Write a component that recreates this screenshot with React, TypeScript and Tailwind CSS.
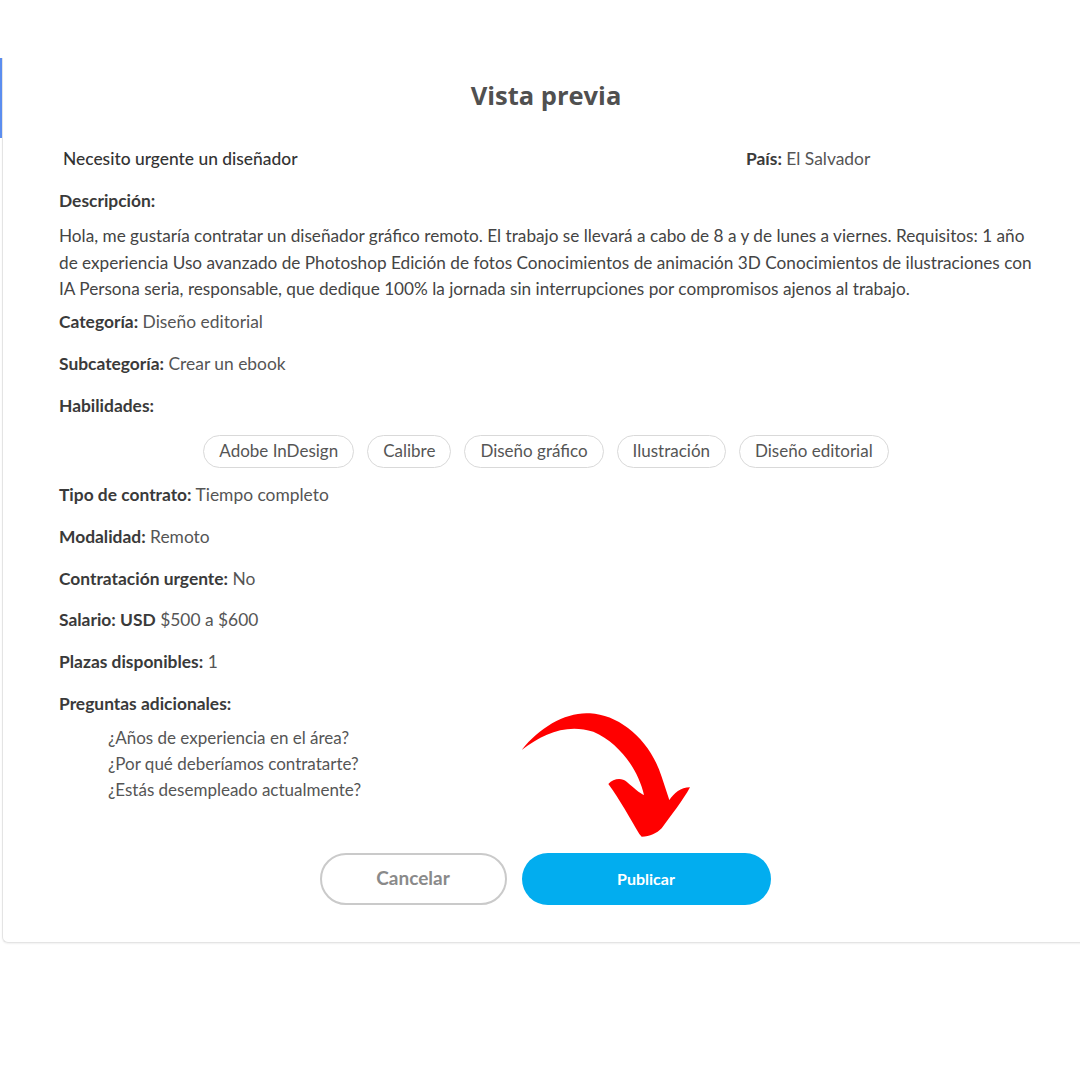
import React from "react";

const Row = ({ label, value, className = "" }: { label: string; value: string; className?: string }) => (
  <div className={"h-6 leading-6 text-[17.4px] " + className}>
    <span className="font-bold text-[#3a3a3a]">{label}</span>{" "}
    <span className="text-[#555]">{value}</span>
  </div>
);

const chips = ["Adobe InDesign", "Calibre", "Diseño gráfico", "Ilustración", "Diseño editorial"];

export default function App() {
  return (
    <div className="relative w-[1080px] h-[1080px] bg-white overflow-hidden" style={{ fontFamily: "Lato, 'Open Sans', sans-serif" }}>
      <div className="mt-[58px] ml-[2px] w-[1090px] border-l border-b border-[#e4e4e4] rounded-bl-[6px] shadow-[0_1px_2px_rgba(0,0,0,0.06)] pl-[56px] pr-[58px] pt-[21px] pb-[37px]">
        <div className="w-[974px]">
          <h1 className="text-center h-8 leading-8 text-[25.5px] font-bold text-[#505050]" style={{ fontFamily: "'Open Sans', sans-serif" }}>
            Vista previa
          </h1>
          <div className="mt-[36px] flex h-6 leading-6 text-[17.4px]">
            <div className="ml-[4px] w-[683px] font-medium text-[#333]">Necesito urgente un diseñador</div>
            <div>
              <span className="font-bold text-[#3a3a3a]">País:</span> <span className="text-[#555]">El Salvador</span>
            </div>
          </div>
          <div className="mt-[18px] h-6 leading-6 text-[17.4px] font-bold text-[#3a3a3a]">Descripción:</div>
          <p className="mt-[10px] text-[17.2px] leading-[26.5px] text-[#444]">
            Hola, me gustaría contratar un diseñador gráfico remoto. El trabajo se llevará a cabo de 8 a y de lunes a viernes. Requisitos: 1 año de experiencia Uso avanzado de Photoshop Edición de fotos Conocimientos de animación 3D Conocimientos de ilustraciones con IA Persona seria, responsable, que dedique 100% la jornada sin interrupciones por compromisos ajenos al trabajo.
          </p>
          <Row className="mt-[7px]" label="Categoría:" value="Diseño editorial" />
          <Row className="mt-[18px]" label="Subcategoría:" value="Crear un ebook" />
          <Row className="mt-[18px]" label="Habilidades:" value="" />
          <div className="mt-[17px] flex justify-center gap-[13px]">
            {chips.map((c) => (
              <div key={c} className="h-[33px] px-[15px] flex items-center rounded-full border-[1.5px] border-[#d9d9d9] text-[17px] text-[#555]">
                {c}
              </div>
            ))}
          </div>
          <Row className="mt-[15px]" label="Tipo de contrato:" value="Tiempo completo" />
          <Row className="mt-[18px]" label="Modalidad:" value="Remoto" />
          <Row className="mt-[18px]" label="Contratación urgente:" value="No" />
          <Row className="mt-[17px]" label="Salario: USD" value="$500 a $600" />
          <Row className="mt-[18px]" label="Plazas disponibles:" value="1" />
          <Row className="mt-[18px]" label="Preguntas adicionales:" value="" />
          <div className="mt-[9px] pl-[49px] text-[17px] leading-[26px] text-[#555]">
            <div>¿Años de experiencia en el área?</div>
            <div>¿Por qué deberíamos contratarte?</div>
            <div>¿Estás desempleado actualmente?</div>
          </div>
          <div className="mt-[50px] flex justify-center gap-[15px] pr-[2px]">
            <button className="w-[187px] h-[52px] rounded-full border-2 border-[#cacaca] text-[19px] font-bold text-[#8a8a8a]">
              Cancelar
            </button>
            <button className="w-[249px] h-[52px] rounded-full bg-[#02adef] text-[16px] font-bold text-white">
              Publicar
            </button>
          </div>
        </div>
      </div>
      <div className="absolute left-0 top-[58px] w-[2px] h-[80px] bg-[#5b8def]" />
      <svg className="absolute left-[510px] top-[700px]" width="200" height="150" viewBox="0 0 600 450">
        <path
          fill="#ff0000"
          d="M35,150 C90,80 170,35 240,40 C330,45 420,120 455,230 L478,300 C492,280 512,262 540,262 C520,300 480,350 455,385 C440,400 420,410 395,410 L388,402 C360,355 330,300 295,252 C310,235 335,232 350,245 C370,262 390,280 402,285 C385,210 330,130 250,95 C170,70 100,100 35,150 Z"
        />
      </svg>
    </div>
  );
}
